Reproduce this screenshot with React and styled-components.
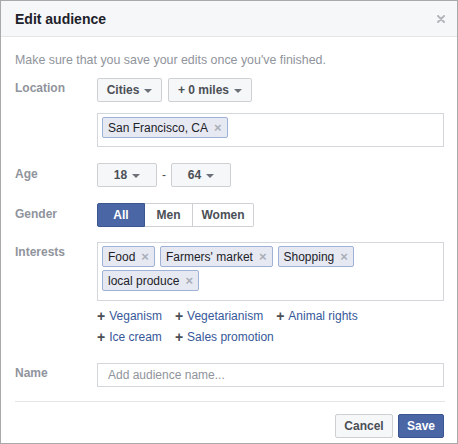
import React from "react";
import styled, { createGlobalStyle } from "styled-components";

const Global = createGlobalStyle`
  html, body { margin: 0; padding: 0; background: #fff; }
  body { font-family: "Liberation Sans", Arial, Helvetica, sans-serif; }
  * { box-sizing: border-box; }
`;

const Dialog = styled.div`
  width: 458px;
  height: 444px;
  border: 1px solid #a9a9a9;
  background: #fff;
  display: flex;
  flex-direction: column;
  color: #1d2129;
  font-size: 12px;
`;

const Header = styled.div`
  height: 36px;
  flex: none;
  display: flex;
  align-items: center;
  justify-content: space-between;
  padding: 0 12px 0 14px;
  background: #f6f7f9;
  border-bottom: 1px solid #e5e5e5;
`;

const Title = styled.h1`
  margin: 0;
  font-size: 14px;
  font-weight: bold;
  color: #1d2129;
`;

const CloseIcon = styled.svg`
  display: block;
  width: 8px;
  height: 8px;
`;

const Body = styled.div`
  padding: 15px 13px 0 14px;
  display: flex;
  flex-direction: column;
`;

const Hint = styled.p`
  margin: 0;
  font-size: 12.4px;
  line-height: 16px;
  color: #90949c;
`;

const Row = styled.div`
  display: grid;
  grid-template-columns: 82px 1fr;
  margin-top: ${(p) => p.$top}px;
`;

const Label = styled.div`
  font-weight: bold;
  font-size: 12px;
  line-height: 16px;
  color: #90949c;
  padding-top: ${(p) => p.$pt ?? 3}px;
`;

const Field = styled.div`
  display: flex;
  flex-direction: column;
  gap: ${(p) => p.$gap ?? 0}px;
`;

const Inline = styled.div`
  display: flex;
  align-items: center;
  gap: ${(p) => p.$gap ?? 6}px;
`;

const Button = styled.button`
  height: 24px;
  width: ${(p) => (p.$w ? `${p.$w}px` : "auto")};
  padding: 0 4px;
  display: inline-flex;
  align-items: center;
  justify-content: center;
  gap: 5px;
  white-space: nowrap;
  font-family: inherit;
  font-size: 12px;
  font-weight: bold;
  color: #4b4f56;
  background: #f6f7f9;
  border: 1px solid #ced0d4;
  border-radius: 2px;
`;

const Caret = styled.span`
  width: 0;
  height: 0;
  border-left: 4px solid transparent;
  border-right: 4px solid transparent;
  border-top: 4px solid #6b7079;
  margin-top: 1px;
`;

const Dash = styled.span`
  font-size: 12px;
  color: #4b4f56;
`;

const Segmented = styled.div`
  display: flex;
  height: 24px;
`;

const Segment = styled.button`
  width: ${(p) => p.$w}px;
  height: 24px;
  font-family: inherit;
  font-size: 12px;
  font-weight: bold;
  padding: 0;
  color: ${(p) => (p.$active ? "#fff" : "#4b4f56")};
  background: ${(p) => (p.$active ? "#4a66a4" : "#fff")};
  border: 1px solid ${(p) => (p.$active ? "#3b5590" : "#ced0d4")};
  border-left-width: ${(p) => (p.$first || p.$active ? 1 : 0)}px;
  border-radius: ${(p) => (p.$first ? "2px 0 0 2px" : p.$last ? "0 2px 2px 0" : "0")};
`;

const TokenBox = styled.div`
  width: 347px;
  min-height: ${(p) => p.$min}px;
  border: 1px solid #d3d6db;
  background: #fff;
  padding: 3px 4px 8px;
  display: flex;
  flex-wrap: wrap;
  align-content: flex-start;
  gap: 3px 5px;
`;

const Token = styled.span`
  height: 21px;
  display: inline-flex;
  align-items: center;
  gap: 6px;
  padding: 0 5px;
  font-size: 12px;
  color: #1d2129;
  background: #e6e9f2;
  border: 1px solid #9fb1d6;
  border-radius: 2px;
`;

const Remove = styled.span`
  color: #a9aeb8;
  font-size: 13px;
  font-weight: bold;
  line-height: 1;
`;

const Suggestions = styled.div`
  margin-top: 7px;
  display: flex;
  flex-direction: column;
  gap: 5px;
`;

const SuggestRow = styled.div`
  display: flex;
  gap: 13px;
`;

const Suggest = styled.a`
  display: inline-flex;
  align-items: center;
  gap: 4px;
  font-size: 12px;
  line-height: 16px;
  color: #365899;
  text-decoration: none;
`;

const Plus = styled.span`
  font-weight: bold;
  font-size: 14px;
  color: #4b4f56;
  line-height: 16px;
`;

const TextInput = styled.input`
  width: 347px;
  height: 24px;
  border: 1px solid #d3d6db;
  padding: 0 10px;
  font-family: inherit;
  font-size: 12px;
  color: #1d2129;
  outline: none;
  &::placeholder { color: #90949c; }
`;

const Divider = styled.hr`
  margin: 14px 0 0;
  border: 0;
  border-top: 1px solid #e5e5e5;
  width: 430px;
`;

const Footer = styled.div`
  margin-top: 12px;
  display: flex;
  justify-content: flex-end;
  gap: 5px;
`;

const FooterButton = styled.button`
  height: 24px;
  width: ${(p) => p.$w}px;
  padding: 0;
  font-family: inherit;
  font-size: 12px;
  font-weight: bold;
  border-radius: 2px;
  color: ${(p) => (p.$primary ? "#fff" : "#4b4f56")};
  background: ${(p) => (p.$primary ? "#4a66a4" : "#f6f7f9")};
  border: 1px solid ${(p) => (p.$primary ? "#3b5590" : "#ced0d4")};
`;

const Dropdown = ({ children, w }) => (
  <Button $w={w}>
    {children}
    <Caret />
  </Button>
);

export default function App() {
  return (
    <>
      <Global />
      <Dialog>
        <Header>
          <Title>Edit audience</Title>
          <CloseIcon viewBox="0 0 8 8">
            <path d="M1 1 L7 7 M7 1 L1 7" stroke="#b4b7bd" strokeWidth="2" strokeLinecap="round" />
          </CloseIcon>
        </Header>
        <Body>
          <Hint>Make sure that you save your edits once you've finished.</Hint>

          <Row $top={10}>
            <Label $pt={2}>Location</Label>
            <Field $gap={11}>
              <Inline $gap={6}>
                <Dropdown w={65}>Cities</Dropdown>
                <Dropdown w={84}>+ 0 miles</Dropdown>
              </Inline>
              <TokenBox $min={34}>
                <Token>
                  San Francisco, CA <Remove>×</Remove>
                </Token>
              </TokenBox>
            </Field>
          </Row>

          <Row $top={16}>
            <Label>Age</Label>
            <Inline $gap={5}>
              <Dropdown w={60}>18</Dropdown>
              <Dash>-</Dash>
              <Dropdown w={60}>64</Dropdown>
            </Inline>
          </Row>

          <Row $top={16}>
            <Label>Gender</Label>
            <Segmented>
              <Segment $w={48} $active $first>All</Segment>
              <Segment $w={48}>Men</Segment>
              <Segment $w={61} $last>Women</Segment>
            </Segmented>
          </Row>

          <Row $top={15}>
            <Label $pt={2}>Interests</Label>
            <Field>
              <TokenBox $min={59}>
                <Token>Food <Remove>×</Remove></Token>
                <Token>Farmers' market <Remove>×</Remove></Token>
                <Token>Shopping <Remove>×</Remove></Token>
                <Token>local produce <Remove>×</Remove></Token>
              </TokenBox>
              <Suggestions>
                <SuggestRow>
                  <Suggest href="#"><Plus>+</Plus>Veganism</Suggest>
                  <Suggest href="#"><Plus>+</Plus>Vegetarianism</Suggest>
                  <Suggest href="#"><Plus>+</Plus>Animal rights</Suggest>
                </SuggestRow>
                <SuggestRow>
                  <Suggest href="#"><Plus>+</Plus>Ice cream</Suggest>
                  <Suggest href="#"><Plus>+</Plus>Sales promotion</Suggest>
                </SuggestRow>
              </Suggestions>
            </Field>
          </Row>

          <Row $top={18}>
            <Label $pt={2}>Name</Label>
            <TextInput placeholder="Add audience name..." />
          </Row>

          <Divider />

          <Footer>
            <FooterButton $w={58}>Cancel</FooterButton>
            <FooterButton $w={46} $primary>Save</FooterButton>
          </Footer>
        </Body>
      </Dialog>
    </>
  );
}
